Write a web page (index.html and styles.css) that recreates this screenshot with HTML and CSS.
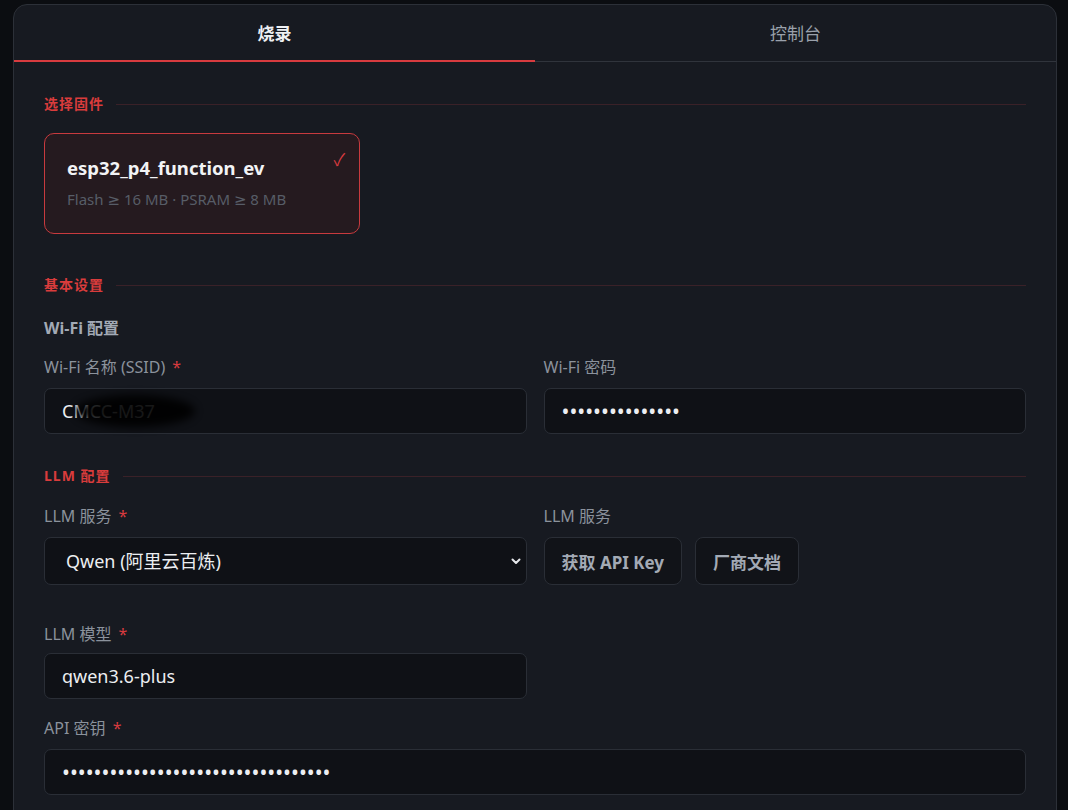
FILE: index.html
```html
<!DOCTYPE html>
<html lang="zh-CN">
<head>
    <meta charset="UTF-8">
    <meta name="viewport" content="width=device-width, initial-scale=1.0">
    <title>固件烧录</title>
    <link rel="stylesheet" href="styles.css">
</head>
<body>
    <main class="panel">
        <nav class="tabs">
            <button class="tab active">烧录</button>
            <button class="tab">控制台</button>
        </nav>

        <form class="flash-form">
            <h2 class="section-title">选择固件</h2>
            <div class="firmware-list">
                <div class="firmware selected">
                    <span class="firmware-check">✓</span>
                    <div class="firmware-name">esp32_p4_function_ev</div>
                    <div class="firmware-req">Flash <span class="ge">≥</span> 16 MB · PSRAM <span class="ge">≥</span> 8 MB</div>
                </div>
            </div>

            <h2 class="section-title">基本设置</h2>
            <h3 class="group-title">Wi-Fi 配置</h3>
            <div class="row">
                <div class="field">
                    <label for="ssid">Wi-Fi 名称 (SSID) <span class="req">*</span></label>
                    <div class="masked">
                        <input type="text" id="ssid" value="CMCC-M37">
                        <span class="smudge"></span>
                    </div>
                </div>
                <div class="field">
                    <label for="wifiPass">Wi-Fi 密码</label>
                    <input type="password" id="wifiPass" value="123456789012345">
                </div>
            </div>

            <h2 class="section-title">LLM 配置</h2>
            <div class="row row-loose">
                <div class="field">
                    <label for="llm">LLM 服务 <span class="req">*</span></label>
                    <div class="select-wrap">
                        <select id="llm">
                            <option>Qwen (阿里云百炼)</option>
                        </select>
                        <svg class="chevron" width="12" height="12" viewBox="0 0 12 12"><path d="M2.5 4.5 6 8l3.5-3.5" fill="none" stroke="#e6e8eb" stroke-width="2" stroke-linecap="round" stroke-linejoin="round"/></svg>
                    </div>
                </div>
                <div class="field">
                    <label>LLM 服务</label>
                    <div class="links">
                        <button type="button" class="link-btn">获取 API Key</button>
                        <button type="button" class="link-btn">厂商文档</button>
                    </div>
                </div>
            </div>
            <div class="row row-tight">
                <div class="field">
                    <label for="model">LLM 模型 <span class="req">*</span></label>
                    <input type="text" id="model" value="qwen3.6-plus">
                </div>
            </div>
            <div class="field">
                <label for="apiKey">API 密钥 <span class="req">*</span></label>
                <input type="password" id="apiKey" value="sk-0123456789abcdef0123456789abcde">
            </div>
        </form>
    </main>
</body>
</html>
```

FILE: styles.css
```css
/* Reset */
body, h2, h3, button, input, select {
    margin: 0;
    padding: 0;
}
body {
    font-family: "Noto Sans", "Noto Sans CJK SC", sans-serif;
    background-color: #0b0d11;
    padding: 4px 11px 0 13px;
    overflow: hidden;
}
.panel {
    background-color: #171a21;
    border: 1px solid #2c3038;
    border-radius: 14px;
    min-height: 900px;
}
.tabs {
    display: flex;
    border-bottom: 1px solid #30343c;
}
.tab {
    flex: 1;
    height: 57px;
    background: none;
    border: none;
    border-bottom: 2px solid transparent;
    margin-bottom: -1px;
    font-family: inherit;
    font-size: 17px;
    color: #9aa1ab;
    cursor: pointer;
}
.tab.active {
    color: #eef0f3;
    font-weight: 700;
    border-bottom-color: #d83b3f;
}
.flash-form {
    padding: 33px 30px 0 30px;
}
.section-title {
    display: flex;
    align-items: center;
    gap: 12px;
    font-size: 14px;
    line-height: 18px;
    font-weight: 700;
    color: #d93c3c;
    letter-spacing: 1px;
}
.section-title::after {
    content: "";
    flex: 1;
    height: 1px;
    background-color: #3a2128;
}
.firmware-list {
    display: flex;
    margin: 20px 0 42px;
}
.firmware {
    position: relative;
    width: 270px;
    height: 99px;
    padding: 0 22px;
    border: 1px solid #c83a3e;
    border-radius: 10px;
    background-color: #251a1f;
    display: flex;
    flex-direction: column;
    justify-content: center;
}
.firmware-check {
    position: absolute;
    top: 12px;
    right: 14px;
    color: #d83b3f;
    font-size: 17px;
}
.firmware-name {
    font-size: 18.5px;
    font-weight: 700;
    color: #f2f3f5;
    margin-top: -4px;
}
.firmware-req {
    font-size: 15px;
    color: #575d67;
    margin-top: 9px;
}
.ge {
    font-family: "DejaVu Sans", sans-serif;
    font-size: 15px;
}
.group-title {
    font-size: 16px;
    font-weight: 700;
    color: #a3aab5;
    margin: 21px 0 18px;
}
.row {
    display: grid;
    grid-template-columns: 1fr 1fr;
    column-gap: 17px;
    margin-bottom: 33px;
}
.row-loose {
    margin-top: 21px;
    margin-bottom: 39px;
}
.row-tight {
    margin-bottom: 19px;
}
.field label {
    display: block;
    font-size: 16px;
    line-height: 20px;
    color: #8b929c;
    margin-bottom: 11px;
}
.row-tight .field label {
    margin-bottom: 9px;
}
.req {
    color: #d83b3f;
    margin-left: 3px;
}
input, select {
    box-sizing: border-box;
    width: 100%;
    height: 46px;
    padding: 0 17px;
    background-color: #0f1116;
    border: 1px solid #2a2e36;
    border-radius: 7px;
    color: #eceef1;
    font-family: inherit;
    font-size: 18px;
    outline: none;
}
input[type="password"] {
    font-size: 21px;
}
.masked {
    position: relative;
}
/* redaction smudge over the SSID */
.smudge {
    position: absolute;
    left: 31px;
    top: 7px;
    width: 120px;
    height: 32px;
    border-radius: 50%;
    background-color: #000;
    filter: blur(4px);
    opacity: 0.9;
}
.select-wrap {
    position: relative;
}
select {
    height: 48px;
    appearance: none;
    padding-left: 21px;
}
.chevron {
    position: absolute;
    right: 5px;
    top: 18px;
}
.links {
    display: flex;
    gap: 13px;
}
.link-btn {
    height: 48px;
    padding: 0 17px;
    background-color: #111318;
    border: 1px solid #2a2e36;
    border-radius: 8px;
    color: #a3aab5;
    font-family: inherit;
    font-size: 17px;
    font-weight: 700;
    cursor: pointer;
}
```
